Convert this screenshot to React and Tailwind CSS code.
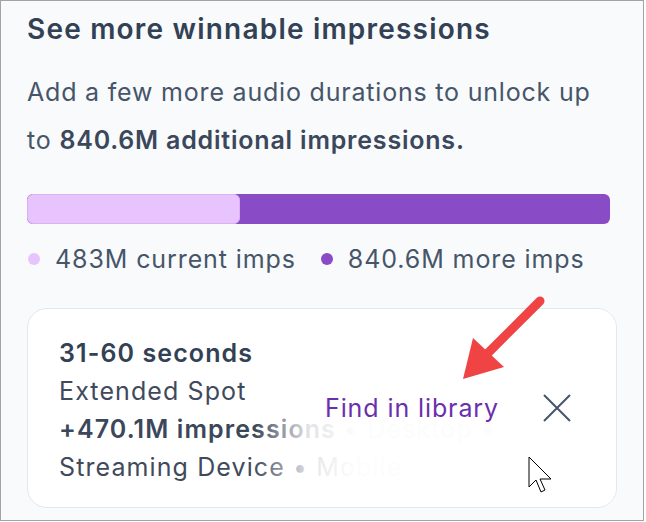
import React from 'react';

const current = 483;
const more = 840.6;

const Legend = ({ color, label }) => (
  <div className="flex items-center gap-[15px]">
    <span className={`w-[12px] h-[12px] rounded-full ${color}`}></span>
    <span>{label}</span>
  </div>
);

const App = () => {
  const pct = (current / (current + more)) * 100;

  return (
    <div className="w-[646px] h-[522px] bg-white font-['Inter',sans-serif]">
      <div className="relative w-[644px] h-[521px] border border-[#a3a3a3] bg-[#f8fafc] pl-[26px] pr-[20px] pt-[10px]">
        <h2 className="text-[28px] leading-[36px] font-semibold text-[#334155] tracking-[1.2px]">
          See more winnable impressions
        </h2>
        <p className="mt-[21px] w-[580px] text-[25px] leading-[48px] text-[#475569] tracking-[0.8px]">
          Add a few more audio durations to unlock up to{' '}
          <strong className="font-semibold text-[#3b475a]">840.6M additional impressions.</strong>
        </p>

        <div className="mt-[30px] flex h-[30px] w-[583px] rounded-[6px] overflow-hidden bg-[#8a4bc6]">
          <div className="h-full rounded-[6px] bg-[#e8c4fe] border border-[#dcb2f5]" style={{ width: `${pct}%` }}></div>
        </div>

        <div className="mt-[19px] flex items-center gap-[25px] text-[25px] leading-[32px] text-[#475569] tracking-[0.9px] pl-[1px]">
          <Legend color="bg-[#e8c4fe]" label="483M current imps" />
          <Legend color="bg-[#8a4bc6]" label="840.6M more imps" />
        </div>

        <div className="relative mt-[33px] w-[590px] h-[200px] rounded-[20px] border border-[#e2e8f0] bg-white pl-[31px] pt-[25px] overflow-hidden">
          <div className="text-[25px] leading-[38px] text-[#3f4a5c] tracking-[1.1px]">
            <div className="font-semibold text-[#334155]">31-60 seconds</div>
            <div>Extended Spot</div>
            <div className="whitespace-nowrap">
              <span className="font-semibold text-[#3b475a]">+470.1M impressions</span> • Desktop •
            </div>
            <div className="whitespace-nowrap">Streaming Device • Mobile</div>
          </div>

          <div className="absolute top-0 bottom-0 left-[226px] right-0 bg-[linear-gradient(to_right,rgba(255,255,255,0)_0px,rgba(255,255,255,0.85)_55px,rgba(255,255,255,0.985)_100px)]"></div>

          <div className="absolute top-0 bottom-0 right-[44px] flex items-center gap-[43px]">
            <button className="text-[25px] leading-[32px] text-[#6b2fad] tracking-[0.9px]">Find in library</button>
            <button className="text-[#475569]">
              <svg width="30" height="30" viewBox="0 0 30 30" fill="none" stroke="currentColor" strokeWidth="2">
                <path d="M2 2L28 28M28 2L2 28" />
              </svg>
            </button>
          </div>
        </div>

        <svg className="absolute left-0 top-0 pointer-events-none" width="644" height="521" viewBox="0 0 644 521">
          <line x1="539" y1="300" x2="486" y2="353" stroke="#f04444" strokeWidth="9" strokeLinecap="round" />
          <polygon points="462,378 472,337 503,366" fill="#f04444" />
          <polygon
            points="528,456 528,486 535,479 540,491 544,489 539,478 550,478"
            fill="#fff"
            stroke="#000"
            strokeWidth="1"
            strokeLinejoin="round"
          />
        </svg>
      </div>
    </div>
  );
};

export default App;
